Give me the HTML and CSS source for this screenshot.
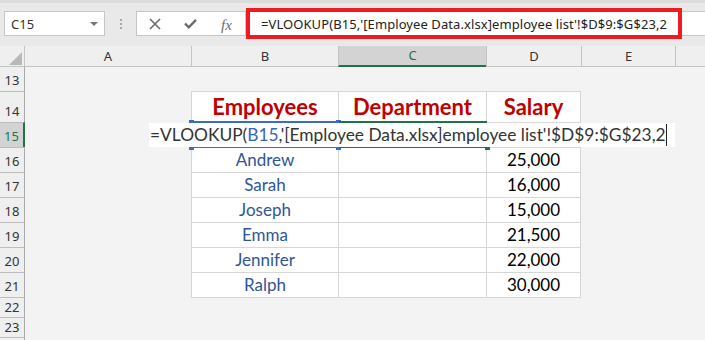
FILE: index.html
```html
<!DOCTYPE html>
<html>
<head>
<meta charset="utf-8">
<link rel="stylesheet" href="styles.css">
</head>
<body>
<div class="app">
  <div class="fbar">
    <div class="namebox"><span class="nb-text">C15</span><span class="nb-arrow"></span></div>
    <div class="grip"><i></i><i></i><i></i></div>
    <div class="fbtns">
      <svg class="ico" width="12" height="12" viewBox="0 0 12 12"><path d="M1 1 L11 11 M11 1 L1 11" stroke="#6b6b6b" stroke-width="1.6" fill="none"/></svg>
      <svg class="ico" width="13" height="11" viewBox="0 0 13 11"><path d="M1 5.5 L4.8 9.3 L12 1.8" stroke="#6b6b6b" stroke-width="2.4" fill="none"/></svg>
      <span class="fx">fx</span>
    </div>
    <div class="finput">
      <span class="ftext">=VLOOKUP(B15,'[Employee Data.xlsx]employee list'!$D$9:$G$23,2</span>
      <div class="redbox"></div>
    </div>
  </div>

  <div class="sheet">
    <div class="row hdr">
      <div class="corner"><svg width="13" height="13" viewBox="0 0 13 13"><polygon points="13,0 13,13 0,13" fill="#b9b9b9"/></svg></div>
      <div class="ch">A</div>
      <div class="ch sep">B</div>
      <div class="ch sep sel">C</div>
      <div class="ch sep">D</div>
      <div class="ch sep">E</div>
      <div class="ch sep"></div>
    </div>

    <div class="row r13">
      <div class="rh">13</div><div></div><div></div><div></div><div></div><div></div><div></div>
    </div>

    <div class="row r14">
      <div class="rh line">14</div><div></div>
      <div class="t th">Employees</div>
      <div class="t th">Department</div>
      <div class="t th tr">Salary</div>
      <div></div><div></div>
    </div>

    <div class="row r15">
      <div class="rh line rsel">15</div><div></div>
      <div class="t"></div>
      <div class="t"></div>
      <div class="t tr"></div>
      <div></div><div></div>
      <div class="blue-sel"><i class="h tl"></i><i class="h trh"></i><i class="h bl"></i><i class="h br"></i></div>
      <div class="green-sel"><i class="gh"></i></div>
      <div class="edit"><span>=VLOOKUP(</span><span class="ref">B15</span><span>,'[Employee Data.xlsx]employee list'!$D$9:$G$23,2</span><i class="caret"></i></div>
    </div>

    <div class="row">
      <div class="rh line">16</div><div></div>
      <div class="t name">Andrew</div><div class="t"></div><div class="t tr num">25,000</div><div></div><div></div>
    </div>
    <div class="row">
      <div class="rh line">17</div><div></div>
      <div class="t name">Sarah</div><div class="t"></div><div class="t tr num">16,000</div><div></div><div></div>
    </div>
    <div class="row">
      <div class="rh line">18</div><div></div>
      <div class="t name">Joseph</div><div class="t"></div><div class="t tr num">15,000</div><div></div><div></div>
    </div>
    <div class="row">
      <div class="rh line">19</div><div></div>
      <div class="t name">Emma</div><div class="t"></div><div class="t tr num">21,500</div><div></div><div></div>
    </div>
    <div class="row">
      <div class="rh line">20</div><div></div>
      <div class="t name">Jennifer</div><div class="t"></div><div class="t tr num">22,000</div><div></div><div></div>
    </div>
    <div class="row">
      <div class="rh line">21</div><div></div>
      <div class="t name">Ralph</div><div class="t"></div><div class="t tr num">30,000</div><div></div><div></div>
    </div>
    <div class="row r22">
      <div class="rh line">22</div><div></div>
      <div class="tb"></div><div class="tb"></div><div class="tb"></div><div></div><div></div>
    </div>
    <div class="row r22">
      <div class="rh line">23</div><div></div><div></div><div></div><div></div><div></div><div></div>
    </div>
    <div class="row r24">
      <div class="rh line"></div><div></div><div></div><div></div><div></div><div></div><div></div>
    </div>
  </div>
</div>
</body>
</html>
```

FILE: styles.css
```css
* { box-sizing: border-box; }
html, body { margin: 0; padding: 0; }
body {
  width: 705px;
  height: 340px;
  overflow: hidden;
  background: #f3f3f3;
  font-family: "Noto Sans", "Open Sans", sans-serif;
}
.app { display: flex; flex-direction: column; }

/* formula bar */
.fbar {
  height: 46px;
  background: #e9e9e9;
  display: flex;
  align-items: flex-start;
  padding-left: 4px;
  border-top: 3px solid #dcdcdc;
  padding-top: 8px;
}
.namebox {
  width: 101px;
  height: 25px;
  background: #fff;
  border: 1px solid #c6c6c6;
  display: flex;
  align-items: center;
  justify-content: space-between;
  padding: 0 6px 0 6px;
}
.nb-text { font-size: 13px; color: #333; }
.nb-arrow {
  width: 0; height: 0;
  border-left: 4px solid transparent;
  border-right: 4px solid transparent;
  border-top: 4px solid #777;
}
.grip {
  width: 31px;
  height: 25px;
  display: flex;
  flex-direction: column;
  align-items: center;
  justify-content: center;
  gap: 2px;
}
.grip i { display: block; width: 2px; height: 2px; background: #a8a8a8; }
.fbtns {
  width: 110px;
  height: 25px;
  background: #fff;
  border: 1px solid #c6c6c6;
  display: flex;
  align-items: center;
  gap: 23px;
  padding: 0 0 0 12px;
}
.fx {
  font-family: "Liberation Serif", serif;
  font-style: italic;
  font-size: 15px;
  color: #6b6b6b;
  margin-left: 1px;
  line-height: 1;
  margin-top: 4px;
}
.finput {
  flex: 1;
  height: 25px;
  background: #fff;
  border-top: 1px solid #c6c6c6;
  border-bottom: 1px solid #c6c6c6;
  position: relative;
  padding-left: 15px;
  line-height: 23px;
  white-space: nowrap;
}
.ftext { font-size: 13px; color: #222; letter-spacing: 0.08px; }
.redbox {
  position: absolute;
  left: 0;
  top: -4px;
  width: 436px;
  height: 31px;
  border: 4px solid #ed1c24;
}

/* sheet */
.sheet { display: flex; flex-direction: column; }
.row {
  display: grid;
  grid-template-columns: 25px 166px 147px 148px 95px 94px 1fr;
  height: 25px;
  position: relative;
}
.hdr {
  height: 21px;
  background: #efefef;
  border-bottom: 1px solid #c4c4c4;
}
.r13 { height: 24px; }
.r14 { height: 31px; }
.r22 { height: 20px; }
.r24 { height: 10px; }

.corner {
  border-right: 1px solid #c4c4c4;
  display: flex;
  align-items: flex-end;
  justify-content: flex-end;
  padding: 0 2px 2px 0;
}
.ch {
  font-size: 13px;
  color: #333;
  text-align: center;
  line-height: 20px;
}
.ch.sep { border-left: 1px solid #c4c4c4; }
.ch.sel {
  background: #d3d3d3;
  color: #217346;
  border-bottom: 2px solid #217346;
  line-height: 19px;
}

.rh {
  background: #efefef;
  border-right: 1px solid #a9a9a9;
  font-size: 13px;
  color: #333;
  text-align: center;
  display: flex;
  align-items: flex-end;
  justify-content: center;
  padding-bottom: 2px;
}
.rh.line { border-top: 1px solid #bdbdbd; }
.rh.rsel {
  background: #d3d3d3;
  color: #217346;
  border-right: 2px solid #217346;
}

/* table cells */
.t {
  background: #fff;
  border-left: 1px solid #d6d6d6;
  border-top: 1px solid #d6d6d6;
  text-align: center;
  font-family: "Lato", sans-serif;
  font-size: 17px;
  line-height: 24px;
  white-space: nowrap;
}
.t.tr { border-right: 1px solid #d6d6d6; }
.tb { border-top: 1px solid #d6d6d6; }
.th {
  color: #c00000;
  font-weight: 700;
  font-size: 22px;
  line-height: 30px;
}
.name { color: #2f5597; }
.num { color: #000; }

/* editing overlay in row 15 */
.edit {
  position: absolute;
  left: 149px;
  top: 1px;
  width: 526px;
  height: 24px;
  background: #fff;
  font-family: "Lato", sans-serif;
  font-size: 17.35px;
  line-height: 24px;
  color: #333;
  white-space: nowrap;
  padding-left: 1px;
  z-index: 2;
}
.edit .ref { color: #3566b8; }
.caret {
  position: absolute;
  left: 517px;
  top: 1px;
  width: 1px;
  height: 22px;
  background: #222;
}
.blue-sel {
  position: absolute;
  left: 191px;
  top: -1px;
  width: 148px;
  height: 27px;
  border-top: 2px solid #3a6cc4;
  border-bottom: 2px solid #3a6cc4;
  z-index: 1;
}
.green-sel {
  position: absolute;
  left: 339px;
  top: -1px;
  width: 148px;
  height: 27px;
  border-top: 2px solid #217346;
  border-bottom: 2px solid #217346;
  z-index: 1;
}
.h, .gh {
  position: absolute;
  width: 5px;
  height: 5px;
  z-index: 5;
}
.h { background: #3a6cc4; }
.gh { background: #217346; right: -3px; bottom: -4px; }
.h.tl { left: -2px; top: -3px; }
.h.trh { right: -2px; top: -3px; }
.h.bl { left: -2px; bottom: -4px; }
.h.br { right: -2px; bottom: -4px; }
```
